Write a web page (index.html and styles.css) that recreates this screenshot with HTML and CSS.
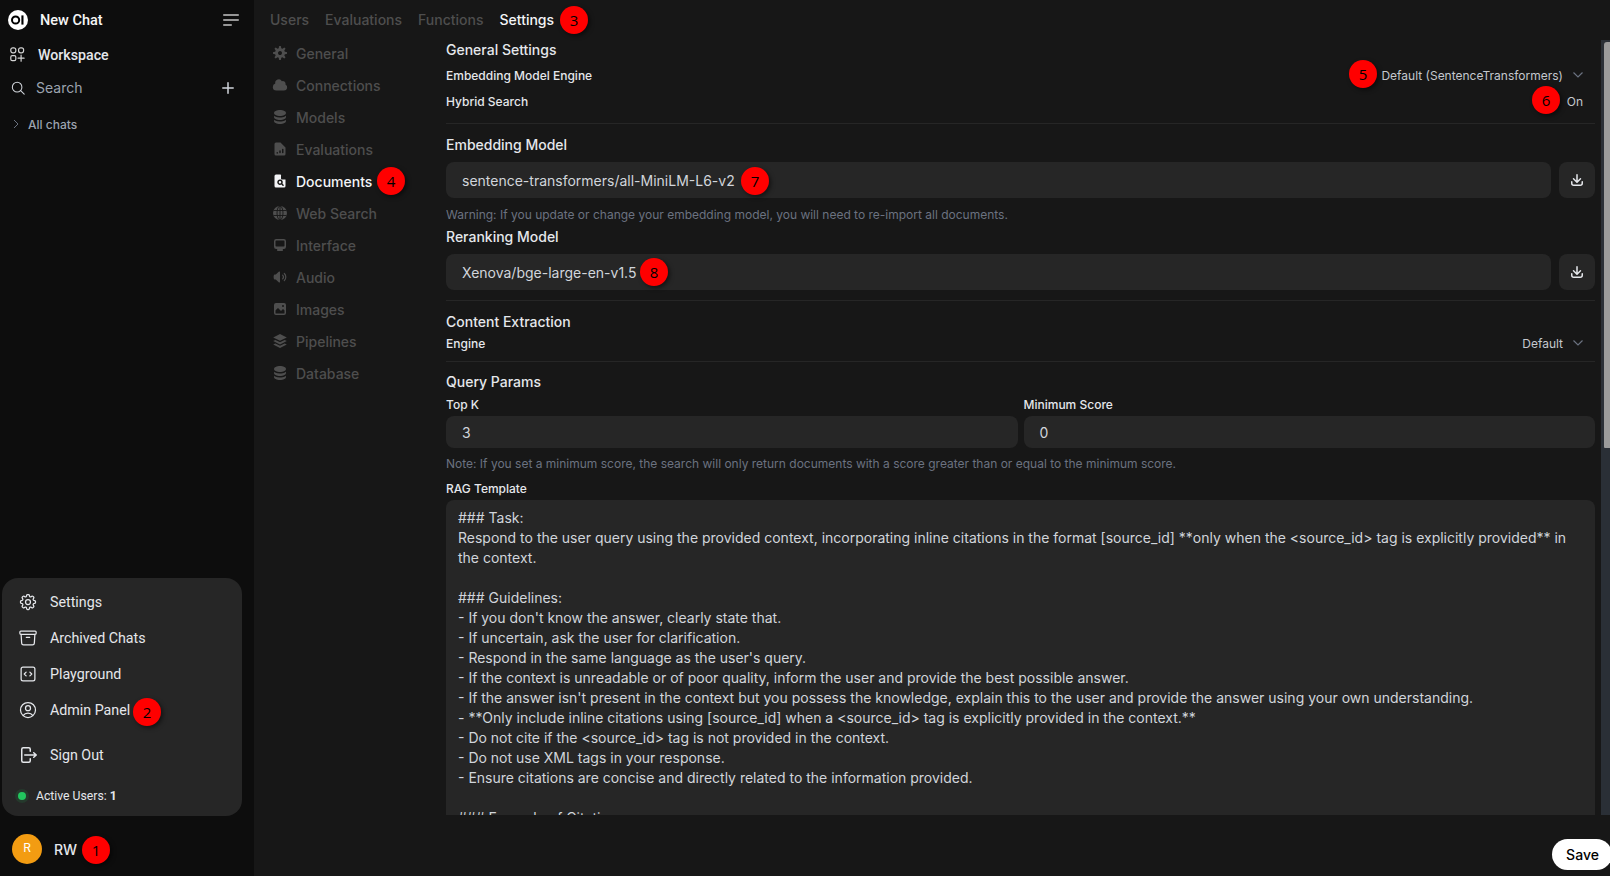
FILE: index.html
```html
<!DOCTYPE html>
<html lang="en">
<head>
<meta charset="utf-8">
<title>Admin Settings</title>
<link rel="stylesheet" href="styles.css">
</head>
<body>
<div class="app">
  <aside class="sidebar">
    <div class="side-top">
      <div class="side-row new-chat">
        <svg class="logo" viewBox="0 0 20 20"><circle cx="10" cy="10" r="10" fill="#fff"/><circle cx="7.6" cy="10" r="3.6" fill="none" stroke="#000" stroke-width="2"/><rect x="13.4" y="5.4" width="2.1" height="9.2" fill="#000"/></svg>
        <span class="nc-label">New Chat</span>
        <svg class="menu-icon" viewBox="0 0 16 12" fill="none" stroke="#c4c4c4" stroke-width="1.5" stroke-linecap="round"><path d="M.75 1h14.5M.75 6h14.5M.75 11h7.5"/></svg>
      </div>
      <div class="side-row workspace">
        <svg class="ws-icon" viewBox="0 0 15 15" fill="none" stroke="#d4d4d4" stroke-width="1.2"><rect x=".8" y=".8" width="5" height="5" rx="2"/><rect x="8.6" y=".8" width="5" height="5" rx="2"/><rect x=".8" y="8.6" width="5" height="5" rx="1.4"/><path d="M11.1 8.2v6M8.1 11.2h6" stroke-linecap="round"/></svg>
        <span class="ws-label">Workspace</span>
      </div>
      <div class="side-row search">
        <svg class="search-icon" viewBox="0 0 24 24" fill="none" stroke="#d1d5db" stroke-width="1.8" stroke-linecap="round"><circle cx="10.5" cy="10.5" r="8.2"/><path d="m16.6 16.6 6 6"/></svg>
        <span class="search-label">Search</span>
        <svg class="plus-icon" viewBox="0 0 12 12" fill="none" stroke="#d1d5db" stroke-width="1.5" stroke-linecap="round"><path d="M6 .8v10.4M.8 6h10.4"/></svg>
      </div>
      <div class="side-row allchats">
        <svg class="ac-chevron" viewBox="0 0 6 10" fill="none" stroke="#6b7280" stroke-width="1"><path d="m1 1 4 4-4 4"/></svg>
        <span class="ac-label">All chats</span>
      </div>
    </div>
    <div class="popup">
      <div class="pop-item">
        <svg class="pop-icon" viewBox="0 0 24 24" fill="none" stroke="currentColor" stroke-width="1.5"><path stroke-linecap="round" stroke-linejoin="round" d="M10.343 3.94c.09-.542.56-.94 1.11-.94h1.093c.55 0 1.02.398 1.11.94l.149.894c.07.424.384.764.78.93.398.164.855.142 1.205-.108l.737-.527a1.125 1.125 0 011.45.12l.773.774c.39.389.44 1.002.12 1.45l-.527.737c-.25.35-.272.806-.107 1.204.165.397.505.71.93.78l.893.15c.543.09.94.56.94 1.109v1.094c0 .55-.397 1.02-.94 1.11l-.893.149c-.425.07-.765.383-.93.78-.165.398-.143.854.107 1.204l.527.738c.32.447.269 1.06-.12 1.45l-.774.773a1.125 1.125 0 01-1.449.12l-.738-.527c-.35-.25-.806-.272-1.203-.107-.397.165-.71.505-.781.929l-.149.894c-.09.542-.56.94-1.11.94h-1.094c-.55 0-1.019-.398-1.11-.94l-.148-.894c-.071-.424-.384-.764-.781-.93-.398-.164-.854-.142-1.204.108l-.738.527c-.447.32-1.06.269-1.45-.12l-.773-.774a1.125 1.125 0 01-.12-1.45l.527-.737c.25-.35.273-.806.108-1.204-.165-.397-.505-.71-.93-.78l-.894-.15c-.542-.09-.94-.56-.94-1.109v-1.094c0-.55.398-1.02.94-1.11l.894-.149c.424-.07.765-.383.93-.78.165-.398.143-.854-.107-1.204l-.527-.738a1.125 1.125 0 01.12-1.45l.773-.773a1.125 1.125 0 011.45-.12l.737.527c.35.25.807.272 1.204.107.397-.165.71-.505.78-.929l.15-.894z"/><path stroke-linecap="round" stroke-linejoin="round" d="M15 12a3 3 0 11-6 0 3 3 0 016 0z"/></svg>
        <span>Settings</span>
      </div>
      <div class="pop-item">
        <svg class="pop-icon" viewBox="0 0 24 24" fill="none" stroke="currentColor" stroke-width="1.5"><path stroke-linecap="round" stroke-linejoin="round" d="M20.25 7.5l-.625 10.632a2.25 2.25 0 01-2.247 2.118H6.622a2.25 2.25 0 01-2.247-2.118L3.75 7.5M10 11.25h4M3.375 7.5h17.25c.621 0 1.125-.504 1.125-1.125v-1.5c0-.621-.504-1.125-1.125-1.125H3.375c-.621 0-1.125.504-1.125 1.125v1.5c0 .621.504 1.125 1.125 1.125z"/></svg>
        <span>Archived Chats</span>
      </div>
      <div class="pop-item">
        <svg class="pop-icon" viewBox="0 0 24 24" fill="none" stroke="currentColor" stroke-width="1.5"><path stroke-linecap="round" stroke-linejoin="round" d="M14.25 9.75L16.5 12l-2.25 2.25m-4.5 0L7.5 12l2.25-2.25M6 20.25h12A2.25 2.25 0 0020.25 18V6A2.25 2.25 0 0018 3.75H6A2.25 2.25 0 003.75 6v12A2.25 2.25 0 006 20.25z"/></svg>
        <span>Playground</span>
      </div>
      <div class="pop-item">
        <svg class="pop-icon" viewBox="0 0 24 24" fill="none" stroke="currentColor" stroke-width="1.5"><path stroke-linecap="round" stroke-linejoin="round" d="M17.982 18.725A7.488 7.488 0 0012 15.75a7.488 7.488 0 00-5.982 2.975m11.963 0a9 9 0 10-11.963 0m11.963 0A8.966 8.966 0 0112 21a8.966 8.966 0 01-5.982-2.275M15 9.75a3 3 0 11-6 0 3 3 0 016 0z"/></svg>
        <span>Admin Panel</span>
      </div>
      <div class="pop-item signout">
        <svg class="pop-icon" viewBox="0 0 20 20" fill="currentColor"><path fill-rule="evenodd" d="M3 4.25A2.25 2.25 0 015.25 2h5.5A2.25 2.25 0 0113 4.25v2a.75.75 0 01-1.5 0v-2a.75.75 0 00-.75-.75h-5.5a.75.75 0 00-.75.75v11.5c0 .414.336.75.75.75h5.5a.75.75 0 00.75-.75v-2a.75.75 0 011.5 0v2A2.25 2.25 0 0110.75 18h-5.5A2.25 2.25 0 013 15.75V4.25z"/><path fill-rule="evenodd" d="M6 10a.75.75 0 0 1 .75-.75h9.546l-1.048-.943a.75.75 0 1 1 1.004-1.114l2.5 2.25a.75.75 0 0 1 0 1.114l-2.5 2.25a.75.75 0 1 1-1.004-1.114l1.048-.943H6.75A.75.75 0 0 1 6 10Z"/></svg>
        <span>Sign Out</span>
      </div>
      <div class="active-users">
        <span class="dot"></span>
        <span>Active Users: <b class="count">1</b></span>
      </div>
    </div>
    <div class="user-row">
      <span class="avatar">R</span>
      <span class="user-name">RW</span>
    </div>
  </aside>

  <main class="main">
    <nav class="tabs">
      <span class="tab">Users</span>
      <span class="tab">Evaluations</span>
      <span class="tab">Functions</span>
      <span class="tab tab-active">Settings</span>
    </nav>
    <div class="body">
      <ul class="subnav">
        <li class="sub-item"><svg class="sub-icon" viewBox="0 0 16 16" fill="currentColor"><path fill-rule="evenodd" d="M6.955 1.45A.5.5 0 0 1 7.452 1h1.096a.5.5 0 0 1 .497.45l.17 1.699c.484.12.94.312 1.356.562l1.321-1.081a.5.5 0 0 1 .67.033l.774.775a.5.5 0 0 1 .034.67l-1.08 1.32c.25.417.44.873.561 1.357l1.699.17a.5.5 0 0 1 .45.497v1.096a.5.5 0 0 1-.45.497l-1.699.17c-.12.484-.312.94-.562 1.356l1.082 1.322a.5.5 0 0 1-.034.67l-.774.774a.5.5 0 0 1-.67.033l-1.322-1.08c-.416.25-.872.44-1.356.561l-.17 1.699a.5.5 0 0 1-.497.45H7.452a.5.5 0 0 1-.497-.45l-.17-1.699a4.973 4.973 0 0 1-1.356-.562L4.108 13.37a.5.5 0 0 1-.67-.033l-.774-.775a.5.5 0 0 1-.034-.67l1.08-1.32a4.971 4.971 0 0 1-.561-1.357l-1.699-.17A.5.5 0 0 1 1 8.548V7.452a.5.5 0 0 1 .45-.497l1.699-.17c.12-.484.312-.94.562-1.356L2.629 4.107a.5.5 0 0 1 .034-.67l.774-.774a.5.5 0 0 1 .67-.033L5.43 3.71a4.97 4.97 0 0 1 1.356-.561l.17-1.699ZM6 8c0 .538.212 1.026.558 1.385l.057.057a2 2 0 0 0 2.828-2.828l-.058-.056A2 2 0 0 0 6 8Z"/></svg>General</li>
        <li class="sub-item"><svg class="sub-icon" viewBox="0 0 20 20" fill="currentColor"><path d="M1 12.5A4.5 4.5 0 005.5 17H15a4 4 0 001.866-7.539 3.504 3.504 0 00-4.504-4.272A4.5 4.5 0 004.06 8.235 4.502 4.502 0 001 12.5z"/></svg>Connections</li>
        <li class="sub-item"><svg class="sub-icon" viewBox="0 0 16 16" fill="currentColor"><path d="M8 7c3.314 0 6-1.343 6-3s-2.686-3-6-3-6 1.343-6 3 2.686 3 6 3Z"/><path d="M8 8.5c1.84 0 3.579-.37 4.914-1.037A6.33 6.33 0 0 0 14 6.78V8c0 1.657-2.686 3-6 3S2 9.657 2 8V6.78c.346.273.72.5 1.087.683C4.42 8.131 6.16 8.5 8 8.5Z"/><path d="M8 12.5c1.84 0 3.579-.37 4.914-1.037.366-.183.74-.41 1.086-.684V12c0 1.657-2.686 3-6 3s-6-1.343-6-3v-1.22c.346.273.72.5 1.087.683C4.42 12.131 6.16 12.5 8 12.5Z"/></svg>Models</li>
        <li class="sub-item"><svg class="sub-icon" viewBox="0 0 16 16" fill="currentColor"><path fill-rule="evenodd" d="M4 1.5A1.5 1.5 0 002.5 3v10A1.5 1.5 0 004 14.500h8a1.500 1.500 0 001.500-1.500V6.500L8.500 1.500H4zm6 7a.75.75 0 011.500 0v3a.75.75 0 01-1.500 0v-3zm-2.750 1.500a.75.75 0 011.500 0v1.500a.75.75 0 01-1.500 0V10zm-2 1a.75.75 0 00-.75.75v.250a.75.75 0 001.500 0v-.250a.75.75 0 00-.75-.75z"/></svg>Evaluations</li>
        <li class="sub-item sub-active"><svg class="sub-icon" viewBox="0 0 16 16" fill="currentColor"><path fill-rule="evenodd" d="M4 1.500A1.500 1.500 0 002.500 3v10A1.500 1.500 0 004 14.500h8a1.500 1.500 0 001.500-1.500V6.500L9 2v3.500A1 1 0 0 0 10 6.500h3.500L8.500 1.500H4zm4 5a2.750 2.750 0 101.400 5.120l1.150 1.150a.75.75 0 001.060-1.060l-1.150-1.150A2.750 2.750 0 008 6.500zM6.750 9.250a1.250 1.250 0 112.500 0 1.250 1.250 0 01-2.500 0z"/></svg>Documents</li>
        <li class="sub-item"><svg class="sub-icon" viewBox="0 0 16 16"><circle cx="8" cy="8" r="7" fill="currentColor"/><g fill="none" stroke="#171717" stroke-width=".9"><ellipse cx="8" cy="8" rx="3" ry="7"/><path d="M1.400 5.500h13.200M1.400 10.500h13.200M8 1v14"/></g></svg>Web Search</li>
        <li class="sub-item"><svg class="sub-icon" viewBox="0 0 16 16" fill="currentColor"><path fill-rule="evenodd" d="M2 4.250A2.250 2.250 0 014.250 2h7.500A2.250 2.250 0 0114 4.250v5.500A2.250 2.250 0 0111.750 12h-1.312c.1.128.21.248.328.36a.75.75 0 01.234.545v.345a.75.75 0 01-.75.75h-4.500a.75.75 0 01-.75-.75v-.345a.75.75 0 01.234-.545c.118-.111.228-.232.328-.36H4.250A2.250 2.250 0 012 9.750v-5.500zm2.250-.75a.75.75 0 00-.75.75v4.500c0 .414.336.75.75.75h7.500a.75.75 0 00.75-.75v-4.500a.75.75 0 00-.75-.75h-7.500z"/></svg>Interface</li>
        <li class="sub-item"><svg class="sub-icon" viewBox="0 0 20 20" fill="currentColor"><path d="M10 3.750a.75.75 0 00-1.264-.546L4.703 7H3.167a.75.75 0 00-.7.48A6.985 6.985 0 002 10c0 .887.165 1.737.468 2.520.111.29.39.48.7.48h1.535l4.033 3.796A.75.75 0 0010 16.250V3.750zM15.950 5.050a.75.75 0 00-1.060 1.061 5.500 5.500 0 010 7.778.75.75 0 001.060 1.060 7 7 0 000-9.899z"/><path d="M13.829 7.172a.75.75 0 00-1.061 1.060 2.500 2.500 0 010 3.536.75.75 0 001.060 1.060 4 4 0 000-5.656z"/></svg>Audio</li>
        <li class="sub-item"><svg class="sub-icon" viewBox="0 0 16 16" fill="currentColor"><path fill-rule="evenodd" d="M2 4a2 2 0 012-2h8a2 2 0 012 2v8a2 2 0 01-2 2H4a2 2 0 01-2-2V4zm10.500 5.707a.5.5 0 00-.146-.353l-1-1a.5.5 0 00-.708 0L9.354 9.646a.5.5 0 01-.708 0L6.354 7.354a.5.5 0 00-.708 0l-2 2a.5.5 0 00-.146.353V12a.5.5 0 00.5.5h8a.5.5 0 00.5-.5V9.707zM12 5a1 1 0 11-2 0 1 1 0 012 0z"/></svg>Images</li>
        <li class="sub-item"><svg class="sub-icon" viewBox="0 0 16 16" fill="currentColor"><path d="M8 1 1.200 4.400 8 7.800l6.800-3.400L8 1Z"/><path d="M3.300 6.900 1.200 8 8 11.400 14.800 8l-2.100-1.100L8 9.250 3.300 6.900Z"/><path d="M3.300 10.500 1.200 11.600 8 15l6.800-3.400-2.100-1.100L8 12.850 3.300 10.500Z"/></svg>Pipelines</li>
        <li class="sub-item"><svg class="sub-icon" viewBox="0 0 16 16" fill="currentColor"><path d="M8 7c3.314 0 6-1.343 6-3s-2.686-3-6-3-6 1.343-6 3 2.686 3 6 3Z"/><path d="M8 8.500c1.840 0 3.579-.37 4.914-1.037A6.330 6.330 0 0 0 14 6.780V8c0 1.657-2.686 3-6 3S2 9.657 2 8V6.780c.346.273.72.5 1.087.683C4.420 8.131 6.160 8.500 8 8.500Z"/><path d="M8 12.500c1.840 0 3.579-.37 4.914-1.037.366-.183.74-.41 1.086-.684V12c0 1.657-2.686 3-6 3s-6-1.343-6-3v-1.220c.346.273.72.5 1.087.683C4.420 12.131 6.160 12.500 8 12.500Z"/></svg>Database</li>
      </ul>
      <div class="scroller">
        <div class="pane">
          <h3 class="title">General Settings</h3>
          <div class="row row-first"><span>Embedding Model Engine</span><span class="value">Default (SentenceTransformers)<svg class="chev" viewBox="0 0 12 8" fill="none" stroke="#6b7280" stroke-width="1.200"><path d="m1.500 1.500 4.500 4.500 4.500-4.500"/></svg></span></div>
          <div class="row"><span>Hybrid Search</span><span class="value value-on">On</span></div>
          <hr class="rule rule-1">

          <h3 class="title">Embedding Model</h3>
          <div class="field-line fl-1"><div class="field">sentence-transformers/all-MiniLM-L6-v2</div><div class="dl-btn"><svg class="dl-icon" viewBox="0 0 16 16" fill="currentColor"><path d="M8.750 2.750a.75.75 0 0 0-1.500 0v5.690L5.030 6.220a.75.75 0 0 0-1.060 1.060l3.500 3.500a.75.75 0 0 0 1.060 0l3.500-3.500a.75.75 0 0 0-1.060-1.060L8.750 8.440V2.750Z"/><path d="M3.500 9.750a.75.75 0 0 0-1.500 0v1.500A2.750 2.750 0 0 0 4.750 14h6.500A2.750 2.750 0 0 0 14 11.250v-1.500a.75.75 0 0 0-1.500 0v1.500c0 .69-.56 1.250-1.250 1.250h-6.500c-.69 0-1.250-.56-1.250-1.250v-1.500Z"/></svg></div></div>
          <p class="hint hint-warn">Warning: If you update or change your embedding model, you will need to re-import all documents.</p>
          <h3 class="title title-rerank">Reranking Model</h3>
          <div class="field-line fl-1"><div class="field">Xenova/bge-large-en-v1.5</div><div class="dl-btn"><svg class="dl-icon" viewBox="0 0 16 16" fill="currentColor"><path d="M8.750 2.750a.75.75 0 0 0-1.500 0v5.690L5.030 6.220a.75.75 0 0 0-1.060 1.060l3.500 3.500a.75.75 0 0 0 1.060 0l3.500-3.500a.75.75 0 0 0-1.060-1.060L8.750 8.440V2.750Z"/><path d="M3.500 9.750a.75.75 0 0 0-1.500 0v1.500A2.750 2.750 0 0 0 4.750 14h6.500A2.750 2.750 0 0 0 14 11.250v-1.500a.75.75 0 0 0-1.500 0v1.500c0 .69-.56 1.250-1.250 1.250h-6.500c-.69 0-1.250-.56-1.250-1.250v-1.500Z"/></svg></div></div>
          <hr class="rule rule-2">

          <h3 class="title">Content Extraction</h3>
          <div class="row row-engine"><span>Engine</span><span class="value">Default<svg class="chev" viewBox="0 0 12 8" fill="none" stroke="#6b7280" stroke-width="1.200"><path d="m1.500 1.500 4.500 4.500 4.500-4.500"/></svg></span></div>
          <hr class="rule rule-3">

          <h3 class="title">Query Params</h3>
          <div class="params">
            <div class="param"><label class="param-label">Top K</label><div class="field field-sm">3</div></div>
            <div class="param"><label class="param-label">Minimum Score</label><div class="field field-sm">0</div></div>
          </div>
          <p class="hint hint-note">Note: If you set a minimum score, the search will only return documents with a score greater than or equal to the minimum score.</p>
          <label class="param-label rag-label">RAG Template</label>
          <div class="template">### Task:
Respond to the user query using the provided context, incorporating inline citations in the format [source_id] **only when the &lt;source_id&gt; tag is explicitly provided** in the context.

### Guidelines:
- If you don't know the answer, clearly state that.
- If uncertain, ask the user for clarification.
- Respond in the same language as the user's query.
- If the context is unreadable or of poor quality, inform the user and provide the best possible answer.
- If the answer isn't present in the context but you possess the knowledge, explain this to the user and provide the answer using your own understanding.
- **Only include inline citations using [source_id] when a &lt;source_id&gt; tag is explicitly provided in the context.**
- Do not cite if the &lt;source_id&gt; tag is not provided in the context.
- Do not use XML tags in your response.
- Ensure citations are concise and directly related to the information provided.

### Example of Citation:</div>
        </div>
      </div>
      <div class="track"><div class="thumb"></div></div>
    </div>
    <div class="footer"><button class="save">Save</button></div>
  </main>

  <span class="badge b1">1</span>
  <span class="badge b2">2</span>
  <span class="badge b3">3</span>
  <span class="badge b4">4</span>
  <span class="badge b5">5</span>
  <span class="badge b6">6</span>
  <span class="badge b7">7</span>
  <span class="badge b8">8</span>
</div>
</body>
</html>
```
FILE: styles.css
```css
* { box-sizing: border-box; }
html, body { margin: 0; height: 100%; overflow: hidden; background: #171717; }
body { font-family: Inter, "Liberation Sans", sans-serif; color: #e5e7eb; }
.app { position: relative; display: flex; width: 1610px; height: 876px; overflow: hidden; }

/* Sidebar */
.sidebar { width: 254px; flex: none; height: 100%; background: #0d0d0d; display: flex; flex-direction: column; }
.side-top { flex: 1; }
.side-row { display: flex; align-items: center; font-size: 14px; line-height: 20px; }
.new-chat { height: 20px; margin-top: 10px; padding-left: 8px; font-family: Roboto, sans-serif; font-size: 14.5px; font-weight: 500; color: #f5f5f5; }
.logo { width: 20px; height: 20px; flex: none; }
.nc-label { margin: 2px 0 0 12px; }
.menu-icon { width: 16px; height: 12px; margin-left: auto; margin-right: 15px; }
.workspace { height: 20px; margin-top: 14px; padding-left: 10px; font-family: Roboto, sans-serif; font-size: 14.2px; font-weight: 500; color: #e5e7eb; }
.ws-icon { width: 15px; height: 15px; flex: none; }
.ws-label { margin: 2px 0 0 13px; }
.search { height: 20px; margin-top: 14px; padding-left: 11px; color: #9ca3af; }
.search-icon { width: 14px; height: 14px; flex: none; }
.search-label { margin-left: 11px; }
.plus-icon { width: 12px; height: 12px; margin-left: auto; margin-right: 20px; }
.allchats { height: 16px; margin-top: 19px; padding-left: 13px; font-size: 12px; line-height: 16px; font-weight: 500; color: #9ca3af; }
.ac-chevron { width: 6px; height: 10px; flex: none; margin-bottom: 3px; }
.ac-label { margin-left: 9px; }

.popup { width: 240px; height: 238px; margin-left: 2px; background: #262626; border-radius: 16px; padding-top: 6px; color: #e5e7eb; font-family: Roboto, sans-serif; }
.pop-item { display: flex; align-items: center; height: 36px; padding-left: 16px; font-size: 14.25px; }
.pop-icon { width: 20px; height: 20px; flex: none; margin-right: 12px; }
.signout { margin-top: 9px; }
.active-users { display: flex; align-items: center; margin-top: 15px; padding-left: 16px; height: 16px; font-size: 12.2px; line-height: 16px; }
.dot { width: 8px; height: 8px; border-radius: 50%; background: #22c55e; box-shadow: 0 0 0 3px rgba(34, 197, 94, .12); margin-right: 10px; flex: none; }
.count { font-weight: 700; }
.user-row { display: flex; align-items: center; height: 30px; margin-top: 18px; margin-bottom: 12px; padding-left: 12px; }
.avatar { width: 30px; height: 30px; border-radius: 50%; background: #f39c12; color: #fff; font-size: 12px; display: flex; align-items: center; justify-content: center; padding-bottom: 3px; flex: none; }
.user-name { margin-left: 12px; font-size: 14px; font-weight: 500; color: #e5e7eb; }

/* Main */
.main { flex: 1; min-width: 0; display: flex; flex-direction: column; background: #171717; }
.tabs { display: flex; gap: 16px; height: 39px; margin-bottom: 1px; padding-left: 16px; align-items: center; font-size: 14px; font-weight: 500; color: #4e4e4e; }
.tab-active { color: #f3f4f6; }
.body { display: flex; height: 775px; }
.subnav { list-style: none; margin: -3px 0 0; padding: 0 0 0 18px; width: 192px; flex: none; font-size: 14px; font-weight: 500; color: #4e4e4e; }
.sub-item { display: flex; align-items: center; height: 32px; }
.sub-active { color: #f3f4f6; }
.sub-icon { width: 16px; height: 16px; margin-right: 8px; flex: none; }

.scroller { flex: 1; min-width: 0; overflow: hidden; }
.track { width: 9px; flex: none; background: #2a2f36; padding: 2px 0 0 3px; }
.thumb { height: 406px; background: #9b9b9b; border-radius: 3px 0 0 1px; }
.pane { padding-right: 6px; }
.title { margin: 0; font-size: 14px; line-height: 20px; font-weight: 500; color: #e5e7eb; }
.title-rerank { margin-top: 4px; }
.row { display: flex; justify-content: space-between; align-items: center; height: 26px; font-size: 12px; font-weight: 500; color: #e5e7eb; }
.row-first { margin-top: 2px; }
.row-engine { height: 20px; margin-top: 1px; }
.value { display: flex; align-items: center; font-weight: 400; color: #c4c8ce; padding-right: 12px; }
.chev { width: 12px; height: 8px; margin-left: 9px; margin-right: -1px; }
.value-on { padding-right: 12px; }
.rule { border: 0; height: 1px; background: #262626; margin: 0; }
.rule-1 { margin-top: 9px; margin-bottom: 11px; }
.rule-2 { margin-top: 10px; margin-bottom: 11px; }
.rule-3 { margin-top: 8px; margin-bottom: 10px; }
.field-line { display: flex; gap: 8px; }
.fl-1 { margin-top: 7px; }
.field { flex: 1; height: 36px; background: #262626; border-radius: 8px; padding-left: 16px; font-size: 14px; line-height: 37px; color: #d1d5db; }
.field-sm { height: 32px; line-height: 33px; }
.dl-btn { width: 36px; height: 36px; flex: none; background: #262626; border-radius: 8px; display: flex; align-items: center; justify-content: center; color: #e5e7eb; }
.dl-icon { width: 16px; height: 16px; }
.hint { margin: 0; font-size: 12px; line-height: 16px; color: #6b7280; }
.hint-warn { margin-top: 9px; }
.hint-note { margin-top: 8px; }
.params { display: flex; gap: 6px; margin-top: 5px; }
.param { flex: 1; min-width: 0; display: flex; flex-direction: column; }
.param-label { display: block; font-size: 12px; line-height: 16px; font-weight: 500; color: #e5e7eb; margin-bottom: 3px; }
.param .field { flex: none; }
.rag-label { margin-top: 9px; }
.template { height: 400px; background: #262626; border-radius: 8px; padding: 8px 12px; font-size: 14px; line-height: 20px; color: #d1d5db; white-space: pre-wrap; }

.footer { flex: 1; display: flex; justify-content: flex-end; align-items: flex-start; padding-top: 24px; }
.save { width: 60px; height: 31px; flex: none; margin-right: -2px; border: 0; border-radius: 16px; background: #fff; color: #000; font: 500 14px/20px Inter, sans-serif; padding: 0 0 0 1px; }

/* Annotation badges laid over the screenshot */
.badge { position: absolute; width: 28px; height: 28px; border-radius: 50%; background: #f00; color: #000; font: 400 15px/28px "Open Sans", sans-serif; text-align: center; box-shadow: 2px 2px 4px rgba(0, 0, 0, .5); }
.b1 { left: 82px; top: 836px; }
.b2 { left: 133px; top: 698px; }
.b3 { left: 560px; top: 6px; }
.b4 { left: 377px; top: 167px; }
.b5 { left: 1349px; top: 60px; }
.b6 { left: 1532px; top: 86px; }
.b7 { left: 741px; top: 167px; }
.b8 { left: 640px; top: 258px; }
```
